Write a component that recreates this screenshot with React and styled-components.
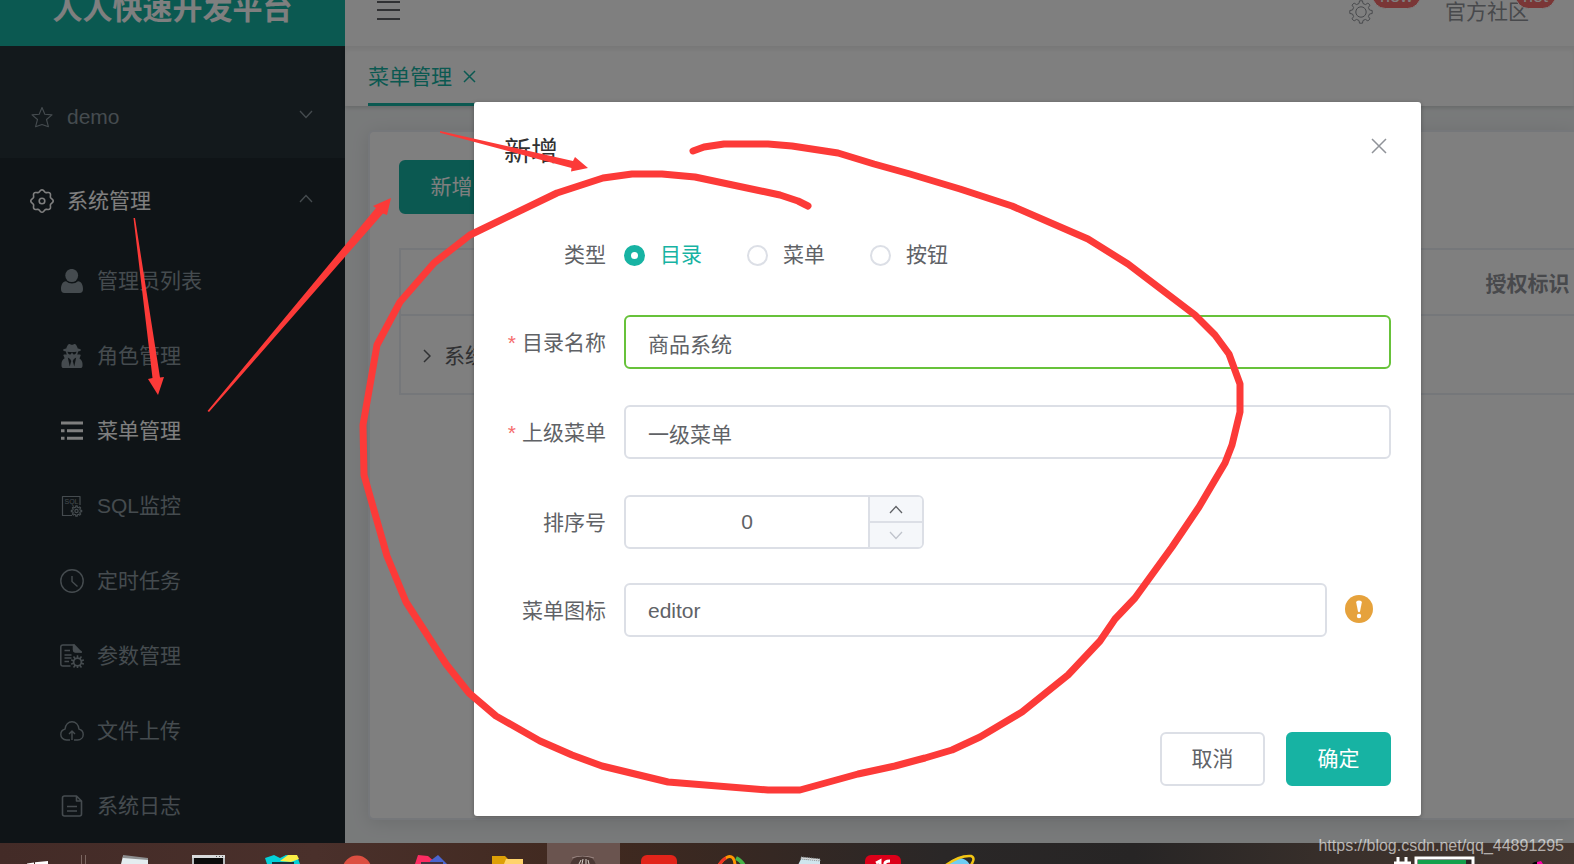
import React, { useState } from "react";
import styled, { createGlobalStyle, css } from "styled-components";
import { FaUserSecret } from "react-icons/fa";

const GlobalStyle = createGlobalStyle`
  * { box-sizing: border-box; }
  html, body { margin: 0; height: 100%; }
  body, button, input {
    font-family: "Liberation Sans", "Noto Sans CJK SC", sans-serif;
    font-size: 21px;
    line-height: 32px;
  }
  button, input { margin: 0; padding: 0; border: 0; background: none; color: inherit; }
  button { cursor: pointer; }
  svg { display: block; flex: none; }
`;

const Screen = styled.div`
  position: relative;
  height: 100vh;
  display: flex;
  flex-direction: column;
  overflow: hidden;
`;

const Site = styled.div`
  position: relative;
  flex: 1;
  min-height: 0;
  display: flex;
  flex-direction: column;
  overflow: hidden;
  background: #f1f4f5;
`;

/* ---------- top bar ---------- */

const TopBar = styled.header`
  position: relative;
  z-index: 2;
  display: flex;
  align-items: flex-end;
  flex: none;
  height: 46px;
  overflow: hidden;
  background: #fff;
`;

const Brand = styled.h1`
  display: flex;
  align-items: center;
  justify-content: center;
  width: 345px;
  height: 75px;
  margin: 0;
  background: #17b3a3;
  color: #fff;
  font-size: 30px;
  line-height: 44px;
  white-space: nowrap;
`;

const TopTools = styled.div`
  flex: 1;
  display: flex;
  align-items: center;
  height: 68px;
  padding: 0 45px 0 32px;
  color: #909399;
`;

const Spacer = styled.div`
  flex: 1;
`;

const IconButton = styled.button`
  display: flex;
  align-items: center;
  justify-content: center;
`;

const FoldButton = styled(IconButton)`
  color: #606266;
`;

const Badged = styled.div`
  position: relative;
  margin-left: 72px;
`;

const Badge = styled.sup`
  position: absolute;
  left: calc(100% + ${(p) => p.$shift}px);
  top: ${(p) => p.$top}px;
  height: 27px;
  padding: 0 7px;
  border: 1px solid #fff;
  border-radius: 14px;
  background: #f56c6c;
  color: #fff;
  font-size: 18px;
  line-height: 27px;
`;

const TopLink = styled.a`
  display: block;
  color: inherit;
  text-decoration: none;
`;

/* ---------- sidebar ---------- */

const Body = styled.div`
  flex: 1;
  min-height: 0;
  display: flex;
`;

const Sidebar = styled.nav`
  flex: none;
  width: 345px;
  padding-top: 28px;
  background: #263238;
  color: #8a979e;
  overflow: hidden;
`;

const MenuTitle = styled.button`
  display: flex;
  align-items: center;
  gap: 13px;
  width: 100%;
  height: 84px;
  padding: 2px 32px 0 30px;
  text-align: left;
  background: ${(p) => (p.$open ? "#1f292e" : "transparent")};
  color: ${(p) => (p.$open ? "#fff" : "inherit")};
`;

const MenuText = styled.span`
  flex: 1;
`;

const Fold = styled.span`
  padding-bottom: 6px;
  color: #8a979e;
`;

const SubMenu = styled.ul`
  margin: 0;
  padding: 1px 0 0;
  list-style: none;
  background: #1f292e;
`;

const SubLink = styled.a`
  display: flex;
  align-items: center;
  gap: 13px;
  height: 75px;
  padding-left: 60px;
  color: ${(p) => (p.$active ? "#fff" : "inherit")};
  text-decoration: none;
  white-space: nowrap;
`;

/* ---------- content ---------- */

const Content = styled.main`
  flex: 1;
  min-width: 0;
  display: flex;
  flex-direction: column;
`;

const TabStrip = styled.div`
  position: relative;
  z-index: 1;
  display: flex;
  height: 60px;
  padding-left: 23px;
  background: #fff;
  box-shadow: 0 2px 4px rgba(0, 0, 0, 0.12), 0 0 6px rgba(0, 0, 0, 0.04),
    inset 0 4px 4px rgba(0, 0, 0, 0.06);
`;

const Tab = styled.div`
  display: flex;
  align-items: center;
  gap: 11px;
  border-bottom: 3px solid #17b3a3;
  padding: 4px 10px 0 0;
  color: #17b3a3;
`;

const Card = styled.section`
  flex: 1;
  margin: 24px 0 23px 23px;
  padding: 28px 0 0 29px;
  border: 2px solid #ebeef5;
  border-right: 0;
  border-radius: 6px 0 0 6px;
  background: #fff;
  box-shadow: 0 3px 18px rgba(0, 0, 0, 0.1);
`;

const Button = styled.button`
  height: 54px;
  min-width: 105px;
  padding: 0 28px;
  border: 2px solid #dcdfe6;
  border-radius: 6px;
  background: #fff;
  color: #606266;
  ${(p) =>
    p.$primary &&
    css`
      border-color: #17b3a3;
      background: #17b3a3;
      color: #fff;
    `}
`;

const Table = styled.table`
  width: 100%;
  margin-top: 34px;
  border-collapse: collapse;
  table-layout: fixed;
  color: #606266;

  th, td {
    border-top: 2px solid #ebeef5;
    border-bottom: 2px solid #ebeef5;
    padding: 3px 0 0;
  }
  tr > :first-child { border-left: 2px solid #ebeef5; }
  th { height: 66px; color: #909399; text-align: center; }
  td { height: 79px; }
`;

const TitleColumn = styled.col`
  width: 225px;
`;

const PermColumn = styled.col`
  width: 93px;
`;

const Expand = styled.span`
  display: flex;
  align-items: center;
  gap: 13px;
  padding-left: 22px;
`;

/* ---------- dialog ---------- */

const Mask = styled.div`
  position: absolute;
  inset: 0;
  z-index: 5;
  display: flex;
  align-items: flex-start;
  padding: 102px 153px 0 474px;
  background: rgba(0, 0, 0, 0.5);
`;

const Dialog = styled.form`
  flex: 1;
  min-width: 0;
  padding: 30px;
  border-radius: 3px;
  background: #fff;
  box-shadow: 0 1px 4px rgba(0, 0, 0, 0.3);
  color: #606266;
`;

const DialogHead = styled.div`
  display: flex;
  justify-content: space-between;
  align-items: flex-start;
  height: 95px;
  padding-right: 4px;
`;

const DialogTitle = styled.h2`
  margin: 0;
  color: #303133;
  font-size: 27px;
  font-weight: 400;
  line-height: 40px;
`;

const CloseButton = styled(IconButton)`
  height: 27px;
  color: #909399;
`;

const Field = styled.div`
  display: flex;
  align-items: flex-start;
  min-height: ${(p) => (p.$tall ? 58 : 56)}px;
  margin-bottom: 32px;
`;

const FieldLabel = styled.label`
  flex: none;
  width: 120px;
  padding-right: 18px;
  text-align: right;
  line-height: 56px;
  white-space: nowrap;
`;

const Required = styled.span`
  margin-right: 6px;
  color: #f56c6c;
`;

const TextInput = styled.input`
  flex: 1;
  min-width: 0;
  height: 54px;
  padding: 2px 22px 0;
  border: 2px solid ${(p) => (p.$valid ? "#67c23a" : "#dcdfe6")};
  border-radius: 6px;
  background: #fff;
  outline: none;
`;

const RadioRow = styled.div`
  display: flex;
  align-items: center;
  gap: 45px;
  height: 56px;
`;

const RadioLabel = styled.label`
  display: flex;
  align-items: center;
  gap: 15px;
  color: ${(p) => (p.$on ? "#17b3a3" : "inherit")};
`;

const RadioDot = styled.input`
  appearance: none;
  width: 21px;
  height: 21px;
  border: 2px solid #dcdfe6;
  border-radius: 50%;
  background: #fff;

  &:checked {
    border: 7px solid #17b3a3;
  }
`;

const NumberBox = styled.div`
  display: flex;
  width: 300px;
  height: 54px;
  border: 2px solid #dcdfe6;
  border-radius: 6px;
  overflow: hidden;
`;

const NumberInput = styled.input`
  flex: 1;
  min-width: 0;
  text-align: center;
  outline: none;
`;

const Stepper = styled.div`
  display: flex;
  flex-direction: column;
  width: 54px;
  border-left: 2px solid #dcdfe6;
`;

const StepButton = styled.button`
  flex: 1;
  display: flex;
  align-items: center;
  justify-content: center;
  background: #f5f7fa;
  color: ${(p) => (p.disabled ? "#c0c4cc" : "#606266")};

  & + & { border-top: 2px solid #dcdfe6; }
`;

const Hint = styled.span`
  display: flex;
  align-items: center;
  height: 52px;
  margin: 0 18px;
`;

const DialogFoot = styled.div`
  display: flex;
  justify-content: flex-end;
  gap: 21px;
  margin-top: 93px;
`;

/* ---------- desktop taskbar ---------- */

const Taskbar = styled.footer`
  position: relative;
  flex: none;
  display: flex;
  height: 21px;
  overflow: hidden;
  background: linear-gradient(90deg, #432b27 0%, #4a302b 20%, #40291f 38%, #2a2727 60%, #272525 72%, #3a302b 86%, #453831 100%);
`;

const StartArea = styled.div`
  width: 97px;
`;

const TaskItem = styled.button`
  display: flex;
  justify-content: center;
  align-items: flex-start;
  width: 73px;
  height: 21px;
  margin-right: 2px;
  background: ${(p) => (p.$active ? "#6a544f" : "transparent")};
`;

const Tray = styled.div`
  margin-left: auto;
`;

const Watermark = styled.div`
  position: absolute;
  right: 10px;
  bottom: 8px;
  z-index: 7;
  color: rgba(255, 255, 255, 0.62);
  font-size: 16px;
  line-height: 20px;
`;

const Marks = styled.svg`
  position: absolute;
  left: 0;
  top: 0;
  z-index: 6;
  pointer-events: none;
`;

/* ---------- icons ---------- */

function gearPath(cx, cy, outer, inner, teeth) {
  const step = (Math.PI * 2) / teeth;
  const pts = [];
  for (let i = 0; i < teeth; i++) {
    const a = i * step - Math.PI / 2;
    [[-0.3, inner], [-0.17, outer], [0.17, outer], [0.3, inner]].forEach(([k, r]) => {
      pts.push(`${(cx + r * Math.cos(a + k * step)).toFixed(2)} ${(cy + r * Math.sin(a + k * step)).toFixed(2)}`);
    });
  }
  return `M${pts.join("L")}Z`;
}

function lobedPath(cx, cy, radius, depth, lobes) {
  const pts = [];
  for (let i = 0; i < 96; i++) {
    const a = (i / 96) * Math.PI * 2;
    const r = radius + depth * Math.cos(lobes * a);
    pts.push(`${(cx + r * Math.cos(a)).toFixed(2)} ${(cy + r * Math.sin(a)).toFixed(2)}`);
  }
  return `M${pts.join("L")}Z`;
}

function Icon({ size = 24, width = 1.4, children }) {
  return (
    <svg width={size} height={size} viewBox="0 0 24 24" fill="none" stroke="currentColor"
      strokeWidth={width} strokeLinejoin="round" aria-hidden="true">
      {children}
    </svg>
  );
}

const Star = () => (
  <Icon width={1.1}><path d="M12 2.5 14.8 9.3 22 9.9 16.5 14.5 18.4 21.7 12 19.5 5.6 21.7 7.5 14.5 2 9.9 9.2 9.3Z" /></Icon>
);
const Flower = () => (
  <Icon width={1.6}>
    <path d={lobedPath(12, 12, 10.2, 1, 8)} />
    <circle cx="12" cy="12" r="2.8" />
  </Icon>
);
const User = () => (
  <Icon>
    <g fill="currentColor" stroke="none">
      <ellipse cx="11.7" cy="6.5" rx="6.4" ry="6.6" />
      <path d="M6 12.2C2.5 12.6 1 16 1 20q0 4 3.5 4h15q3.500 0 3.500-4c0-4-1.500-7.400-5-7.800q-2.500 2.200-6 2.200t-6-2.200Z" />
    </g>
  </Icon>
);
const ListIcon = () => (
  <Icon>
    <path fill="currentColor" stroke="none" d="M1 2.500h22v3H1Zm0 7.700h3.500v3H1Zm6 0h16v3H7Zm-6 7.600h3.500v3H1Zm6 0h16v3H7Z" />
  </Icon>
);
const Sql = () => (
  <Icon width={1.2}>
    <path d="M12 21.500H2.500v-19h17.500V11" />
    <text x="4.500" y="10" fontSize="7" fill="currentColor" stroke="none">SQL</text>
    <path d={gearPath(16.500, 17, 5.200, 3.800, 8)} />
    <circle cx="16.500" cy="17" r="1.600" />
  </Icon>
);
const Clock = () => (
  <Icon><circle cx="12" cy="12" r="11.200" /><path d="M12 7v5.500l5.500 5" /></Icon>
);
const FileGear = () => (
  <Icon width={1.5}>
    <path d="M10.500 22H3q-2.200 0-2.200-2.200V3.200Q.8 1 3 1h10.500" />
    <path d="M13.500.5V6q0 1.500 1.500 1.500h6V9" />
    <path fill="currentColor" d="M14 .8 21 8h-5.500Q14 8 14 6.500Z" />
    <path d="M4.500 6.500H10M4.500 11h7M4.500 14h7M4.500 17.500H9" />
    <path fill="currentColor" stroke="none" d={gearPath(17.500, 18, 6.800, 4.600, 10)} />
    <circle cx="17.500" cy="18" r="3" fill="#1f292e" stroke="none" />
  </Icon>
);
const CloudUp = () => (
  <Icon>
    <path d="M10 21H6.500C3 21 .8 18.400.8 15.500c0-2.800 1.800-4.800 4.200-5.400C5.500 5.800 8.400 2.800 12 2.800s6.500 3 7 7.300c2.400.6 4.200 2.600 4.200 5.400 0 2.900-2.200 5.500-5.700 5.500H14M12 21v-9m-3 3 3-3 3 3" />
  </Icon>
);
const Log = () => (
  <Icon width={1.600}>
    <path d="M4.500 2h12L21.500 7V20q0 2-2 2h-15q-2 0-2-2V4q0-2 2-2ZM16.500 2v5h5M7 12.500h10M7 17h10" />
  </Icon>
);
const HeaderGear = () => (
  <Icon width={1}><path d={gearPath(12, 12, 11.300, 8.700, 8)} /><circle cx="12" cy="12" r="5.200" /></Icon>
);
const Lines = ({ d, w, h, sw = 1.500 }) => (
  <svg width={w} height={h} fill="none" stroke="currentColor" strokeWidth={sw} aria-hidden="true"><path d={d} /></svg>
);
const Cross = ({ size }) => <Lines w={size} h={size} d={`M1 1 ${size - 1} ${size - 1}M${size - 1} 1 1 ${size - 1}`} />;
const Down = () => <Lines w={14} h={9} sw={1.300} d="M1 1 7 7.500 13 1" />;
const Up = () => <Lines w={14} h={9} sw={1.300} d="M1 8 7 1.500 13 8" />;

const submenu = [
  ["管理员列表", User],
  ["角色管理", () => <FaUserSecret size={24} />],
  ["菜单管理", ListIcon],
  ["SQL监控", Sql],
  ["定时任务", Clock],
  ["参数管理", FileGear],
  ["文件上传", CloudUp],
  ["系统日志", Log],
];

const taskIcons = [
  ["记事", <><path d="M8 13 33 16V21H6Z" fill="#e4edf0" /><path d="M8 12 33 15v2L8 15Z" fill="#8d8f90" /></>],
  ["终端", <><path d="M2 12h33v9H2Z" fill="#b9bcbe" /><path d="M4 15h29v6H4Z" fill="#0b0b0b" /><path d="M2 12h33v3H2Z" fill="#d8dadb" /><path d="M26 13.500h7" stroke="#555" strokeDasharray="1 2" /></>],
  ["PyCharm", <><path d="M0 15 9 12l6 3 6-3 11 1 3 8H2Z" fill="#04d0d8" /><path d="M15 18 23 12h9l2 4-8 3Z" fill="#fbee45" /><path d="M7 19h22v2H7Z" fill="#17323a" /></>],
  ["浏览器", <circle cx="17" cy="27" r="14.500" fill="#dc4f41" />],
  ["IDEA", <><path d="M3 12l10 1 7 6-2 2H0Z" fill="#fc2d62" /><path d="M15 18l8-6 9 9H15Z" fill="#4a66d0" /><path d="M6 19h22v2H6Z" fill="#43343f" /></>],
  ["文件夹", <><path d="M2 13h13l3 3v5H2Z" fill="#dda007" /><path d="M16 16h17v5H14Z" fill="#ffd36c" /></>],
  ["开发工具", <><ellipse cx="18" cy="24" rx="13" ry="12" fill="#4b3834" /><path d="M7 15q10-4 22 0" stroke="#998581" fill="none" /><path d="M14 21l2-4m1 4 1-5m3 5v-5m3 5-1-4" stroke="#d8cfc9" /></>],
  ["有道", <rect x="1" y="12" width="36" height="20" rx="6" fill="#e2241a" />],
  ["图形", <><path d="M4 22Q13 10 18 15q2 3 2 7" fill="none" stroke="#ff9500" strokeWidth="3" /><path d="M4 22q4-6 7-7" stroke="#ee3524" strokeWidth="3" fill="none" /><path d="M21 15q6 3 8 8" fill="none" stroke="#45b649" strokeWidth="4" /></>],
  ["记事本", <><path d="M11 16 30 17v5H8Z" fill="#cfe6ee" /><path d="M11 14 30 16v2L11 16Z" stroke="#8d9698" strokeDasharray="1 1" fill="#d8dadb" /></>],
  ["音乐", <><rect x="0" y="12" width="36" height="20" rx="6" fill="#dc0019" /><path d="M11 20l4-2v4M25 18q-6 0-5 4" fill="none" stroke="#fff" strokeWidth="3" /></>],
  ["IE", <><circle cx="19" cy="27" r="12" fill="#6fcdf3" /><path d="M6 22Q20 12 31 13q5 2 0 9" fill="none" stroke="#f3c614" strokeWidth="2.500" /></>],
];

function Annotations() {
  return (
    <Marks width="1574" height="864" viewBox="0 0 1574 864" fill="#fc3a38" aria-hidden="true">
      <path fill="none" stroke="#fc3a38" strokeWidth="7" strokeLinecap="round" strokeLinejoin="round"
        d="M693 151 704 147 724 144H768L792 146 838 153 874 164 910 174 960 189 1012 206 1088 239 1128 264 1195 315 1215 335 1229 354 1240 384V412L1232 445 1225 463 1199 507 1172 547 1135 598 1115 619 1100 641 1068 675 1022 712 980 737 952 750 925 758 895 766 858 774 800 790H768L668 782 602 766 572 755 540 741 496 716 469 693 446 664 406 602 387 556 364 475 363 425 377 345 400 302 434 263 470 235 557 193 603 178 632 174H662L695 177 780 195 798 201 808 206" />
      <path d="M133.500 218H135L160 377.500 164 377 158 395 148 379 152.500 378Z" />
      <path d="M207.500 411 209 412 383 213.500 387 215 391 198 373 206 376 208Z" />
      <path d="M440 131V132.800L571.500 168 571 171.500 588 168 575 157 573 161Z" />
    </Marks>
  );
}

export default function App() {
  const [type, setType] = useState("目录");
  const [name, setName] = useState("商品系统");
  const [order, setOrder] = useState(0);
  const [icon, setIcon] = useState("editor");

  return (
    <Screen>
      <GlobalStyle />
      <Site>
        <TopBar>
          <Brand>人人快速开发平台</Brand>
          <TopTools>
            <FoldButton aria-label="折叠菜单">
              <Lines w={23} h={24} sw={2} d="M0 2h23M0 10h23M0 19h23" />
            </FoldButton>
            <Spacer />
            <Badged>
              <IconButton aria-label="设置"><HeaderGear /></IconButton>
              <Badge $shift={-1} $top={-18}>new</Badge>
            </Badged>
            <Badged>
              <TopLink href="#community">官方社区</TopLink>
              <Badge $shift={-14} $top={-14}>hot</Badge>
            </Badged>
          </TopTools>
        </TopBar>
        <Body>
          <Sidebar>
            <MenuTitle><Star /><MenuText>demo</MenuText><Fold><Down /></Fold></MenuTitle>
            <MenuTitle $open><Flower /><MenuText>系统管理</MenuText><Fold><Up /></Fold></MenuTitle>
            <SubMenu>
              {submenu.map(([text, Glyph]) => (
                <li key={text}>
                  <SubLink href="#menu" $active={text === "菜单管理"}><Glyph />{text}</SubLink>
                </li>
              ))}
            </SubMenu>
          </Sidebar>
          <Content>
            <TabStrip>
              <Tab>菜单管理<IconButton aria-label="关闭标签"><Cross size={13} /></IconButton></Tab>
            </TabStrip>
            <Card>
              <Button $primary>新增</Button>
              <Table>
                <colgroup><TitleColumn /><col /><PermColumn /></colgroup>
                <thead><tr><th /><th /><th>授权标识</th></tr></thead>
                <tbody>
                  <tr>
                    <td><Expand><Lines w={8} h={14} d="M1 1 7 7 1 13" />系统管理</Expand></td>
                    <td /><td />
                  </tr>
                </tbody>
              </Table>
            </Card>
          </Content>
        </Body>

        <Mask>
          <Dialog onSubmit={(e) => e.preventDefault()}>
            <DialogHead>
              <DialogTitle>新增</DialogTitle>
              <CloseButton type="button" aria-label="关闭"><Cross size={16} /></CloseButton>
            </DialogHead>
            <Field role="radiogroup" aria-labelledby="type-label">
              <FieldLabel as="span" id="type-label">类型</FieldLabel>
              <RadioRow>
                {["目录", "菜单", "按钮"].map((t) => (
                  <RadioLabel key={t} $on={type === t}>
                    <RadioDot type="radio" name="type" checked={type === t} onChange={() => setType(t)} />
                    {t}
                  </RadioLabel>
                ))}
              </RadioRow>
            </Field>
            <Field $tall>
              <FieldLabel htmlFor="name"><Required>*</Required>目录名称</FieldLabel>
              <TextInput id="name" $valid value={name} onChange={(e) => setName(e.target.value)} />
            </Field>
            <Field $tall>
              <FieldLabel htmlFor="parent"><Required>*</Required>上级菜单</FieldLabel>
              <TextInput id="parent" readOnly value="一级菜单" />
            </Field>
            <Field>
              <FieldLabel htmlFor="order">排序号</FieldLabel>
              <NumberBox>
                <NumberInput id="order" inputMode="numeric" value={order} onChange={(e) => setOrder(Number(e.target.value) || 0)} />
                <Stepper>
                  <StepButton type="button" aria-label="增加" onClick={() => setOrder(order + 1)}><Up /></StepButton>
                  <StepButton type="button" aria-label="减少" disabled={order === 0} onClick={() => setOrder(order - 1)}><Down /></StepButton>
                </Stepper>
              </NumberBox>
            </Field>
            <Field>
              <FieldLabel htmlFor="icon">菜单图标</FieldLabel>
              <TextInput id="icon" value={icon} onChange={(e) => setIcon(e.target.value)} />
              <Hint>
                <svg width="28" height="28" aria-hidden="true">
                  <circle cx="14" cy="14" r="14" fill="#e6a23c" />
                  <path d="M11.200 7.500q0-2 2.800-2t2.800 2L15 16.500q-1 1.500-2 0Z" fill="#fff" />
                  <circle cx="14" cy="21" r="2.200" fill="#fff" />
                </svg>
              </Hint>
            </Field>
            <DialogFoot>
              <Button type="button">取消</Button>
              <Button $primary>确定</Button>
            </DialogFoot>
          </Dialog>
        </Mask>
      </Site>

      <Taskbar>
        <StartArea>
          <svg width="95" height="21" aria-hidden="true">
            <path d="M27 20.500 34 19.500V21H27ZM35 19.300 48 18V21H35Z" fill="#fff" />
            <path d="M81.500 12v9M85.500 12v9" stroke="#7b6660" />
          </svg>
        </StartArea>
        {taskIcons.map(([label, art]) => (
          <TaskItem key={label} aria-label={label} $active={label === "开发工具"}>
            <svg width="38" height="21" aria-hidden="true">{art}</svg>
          </TaskItem>
        ))}
        <Tray>
          <svg width="180" height="21" aria-hidden="true">
            <path d="M4 14v7M12 14v7M0 20h17" stroke="#fff" strokeWidth="3" />
            <path d="M22 21v-6h57v6" fill="#2b2424" stroke="#fff" strokeWidth="3" />
            <path d="M24 17h48v4H24Z" fill="#13a04c" />
            <path d="M138 21q2-3 7-2v2Z" fill="#000" />
            <path d="M143 21v-2l4-1 2 3Z" fill="#f0a" />
          </svg>
        </Tray>
      </Taskbar>

      <Annotations />
      <Watermark>https://blog.csdn.net/qq_44891295</Watermark>
    </Screen>
  );
}
